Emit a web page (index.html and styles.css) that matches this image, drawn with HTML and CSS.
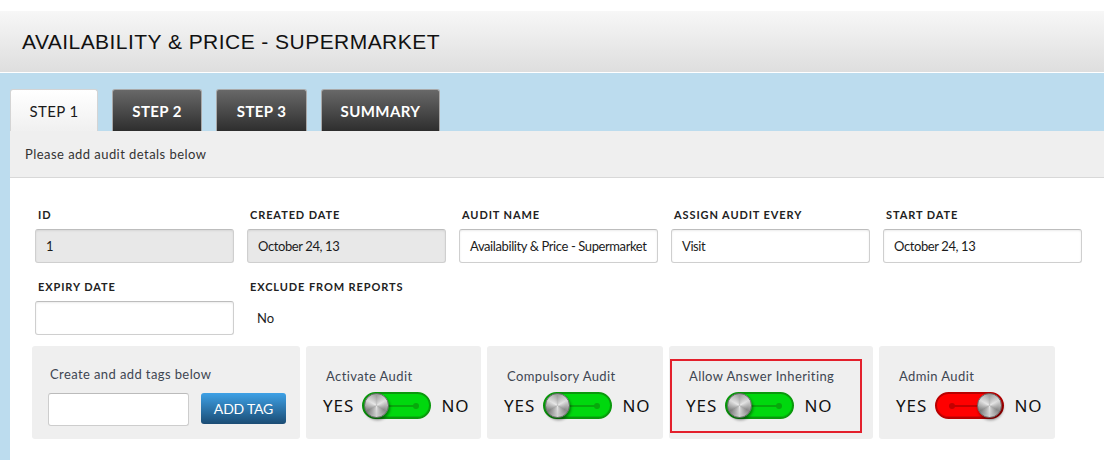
FILE: index.html
```html
<!DOCTYPE html>
<html lang="en">
<head>
  <meta charset="UTF-8" />
  <meta name="viewport" content="width=device-width, initial-scale=1.0" />
  <title>Audit - Step 1</title>
  <link rel="stylesheet" href="styles.css">
</head>
<body>
  <div class="top-gap"></div>
  <header class="page-head">
    <h1>AVAILABILITY &amp; PRICE - SUPERMARKET</h1>
  </header>

  <div class="wrap">
    <nav class="tabs">
      <a class="tab active">STEP 1</a>
      <a class="tab tab-2">STEP 2</a>
      <a class="tab tab-3">STEP 3</a>
      <a class="tab tab-sum">SUMMARY</a>
    </nav>

    <div class="panel">
      <div class="panel-head">Please add audit detals below</div>

      <div class="panel-body">
        <div class="fields">
          <div class="field">
            <label>ID</label>
            <div class="input disabled">1</div>
          </div>
          <div class="field">
            <label>CREATED DATE</label>
            <div class="input disabled">October 24, 13</div>
          </div>
          <div class="field">
            <label>AUDIT NAME</label>
            <div class="input">Availability &amp; Price - Supermarket</div>
          </div>
          <div class="field">
            <label>ASSIGN AUDIT EVERY</label>
            <div class="input">Visit</div>
          </div>
          <div class="field">
            <label>START DATE</label>
            <div class="input">October 24, 13</div>
          </div>
          <div class="field">
            <label>EXPIRY DATE</label>
            <div class="input"></div>
          </div>
          <div class="field">
            <label>EXCLUDE FROM REPORTS</label>
            <div class="plain">No</div>
          </div>
        </div>

        <div class="boxes">
          <div class="box tags">
            <p>Create and add tags below</p>
            <div class="tag-row">
              <div class="tag-input"></div>
              <button class="btn-tag">ADD TAG</button>
            </div>
          </div>

          <div class="box toggle w175">
            <div class="inner">
              <p>Activate Audit</p>
              <div class="yn">
                <span>YES</span>
                <span class="switch on"><i class="track"></i><i class="knob"></i></span>
                <span>NO</span>
              </div>
            </div>
          </div>

          <div class="box toggle w176">
            <div class="inner">
              <p>Compulsory Audit</p>
              <div class="yn">
                <span>YES</span>
                <span class="switch on"><i class="track"></i><i class="knob"></i></span>
                <span>NO</span>
              </div>
            </div>
          </div>

          <div class="box toggle w204 marked">
            <div class="inner">
              <p>Allow Answer Inheriting</p>
              <div class="yn">
                <span>YES</span>
                <span class="switch on"><i class="track"></i><i class="knob"></i></span>
                <span>NO</span>
              </div>
            </div>
          </div>

          <div class="box toggle w176">
            <div class="inner">
              <p>Admin Audit</p>
              <div class="yn">
                <span>YES</span>
                <span class="switch off"><i class="track"></i><i class="knob"></i></span>
                <span>NO</span>
              </div>
            </div>
          </div>
        </div>
      </div>
    </div>
  </div>
</body>
</html>
```

FILE: styles.css
```css
:root {
  --blue-bg: #bcdcee;
  --panel-grey: #efefef;
  --text: #222;
  --soft-text: #3e4652;
}

body {
  margin: 0;
  font-family: Lato, 'Open Sans', sans-serif;
  color: var(--text);
  background: var(--blue-bg);
  overflow: hidden;
}

.top-gap {
  height: 11px;
  background: #fff;
}

.page-head {
  height: 62px;
  box-sizing: border-box;
  padding-left: 22px;
  display: flex;
  align-items: center;
  background: linear-gradient(#f7f7f7, #dedede);
  border-bottom: 1px solid #fff;
}

.page-head h1 {
  margin: 0;
  font-family: 'Liberation Sans', Arial, sans-serif;
  font-weight: normal;
  font-size: 21px;
  color: #111;
  letter-spacing: 0.45px;
  padding-top: 1px;
}

.wrap {
  padding: 16px 0 0 10px;
  height: 400px;
}

/* tabs */
.tabs {
  display: flex;
  gap: 14px;
}

.tab {
  height: 42px;
  box-sizing: border-box;
  display: flex;
  align-items: center;
  justify-content: center;
  font-size: 15px;
  letter-spacing: 0.4px;
  border: 1px solid #a9a9a9;
  border-bottom: none;
  border-radius: 3px 3px 0 0;
  color: #fff;
  font-weight: bold;
  background: linear-gradient(#686868, #2e2e2e);
}

.tab.active {
  width: 88px;
  color: #1a1a1a;
  font-weight: normal;
  border-color: #d4d4d4;
  background: linear-gradient(#ffffff, #f0f0f0);
}

.tab-2 { width: 90px; }
.tab-3 { width: 91px; }
.tab-sum { width: 119px; }

/* panel */
.panel {
  background: #fff;
  height: 100%;
}

.panel-head {
  height: 47px;
  box-sizing: border-box;
  display: flex;
  align-items: center;
  padding-left: 15px;
  background: var(--panel-grey);
  border-bottom: 1px solid #d8d8d8;
  font-size: 13px;
  letter-spacing: 0.45px;
  color: #333;
}

.panel-body {
  padding: 30px 0 0 22px;
}

.fields {
  margin-left: 3px;
  display: grid;
  grid-template-columns: repeat(5, 199px);
  column-gap: 13px;
  row-gap: 17px;
}

.field label {
  display: block;
  font-size: 11px;
  line-height: 14px;
  font-weight: bold;
  letter-spacing: 0.9px;
  margin: 0 0 7px 3px;
}

.input {
  height: 34px;
  box-sizing: border-box;
  border: 1px solid #cfcfcf;
  border-top-color: #bdbdbd;
  border-radius: 3px;
  box-shadow: inset 0 1px 2px rgba(0,0,0,0.08);
  padding: 0 10px;
  display: flex;
  align-items: center;
  font-size: 13px;
  letter-spacing: -0.4px;
  white-space: nowrap;
  overflow: hidden;
  color: #1c1c1c;
  background: #fff;
}

.input.disabled {
  background: #e8e8e8;
}

.plain {
  height: 34px;
  display: flex;
  align-items: center;
  padding-left: 10px;
  font-size: 13px;
}

/* bottom boxes */
.boxes {
  display: flex;
  gap: 6px;
  margin-top: 11px;
}

.box {
  height: 93px;
  box-sizing: border-box;
  background: var(--panel-grey);
  border-radius: 3px;
}

.box p {
  margin: 0;
  font-size: 13px;
  line-height: 16px;
  letter-spacing: 0.4px;
  color: var(--soft-text);
}

.tags {
  width: 268px;
  padding: 20px 0 0 16px;
}

.tags p {
  padding-left: 2px;
}

.tag-row {
  display: flex;
  align-items: flex-start;
  gap: 12px;
  margin-top: 11px;
}

.tag-input {
  width: 141px;
  height: 33px;
  box-sizing: border-box;
  background: #fff;
  border: 1px solid #cdcdcd;
  border-top-color: #bbb;
  border-radius: 3px;
}

.btn-tag {
  width: 85px;
  height: 31px;
  border: none;
  border-radius: 3px;
  color: #fff;
  font-family: Lato, sans-serif;
  font-size: 14px;
  letter-spacing: -0.2px;
  background: linear-gradient(#3ea1e6, #1b4c74);
  padding: 0;
}

.toggle {
  padding: 13px 0 6px 1px;
}

.w175 { width: 175px; }
.w176 { width: 176px; }
.w204 { width: 204px; padding-right: 11px; }

.inner {
  height: 100%;
  box-sizing: border-box;
  border: 2px solid transparent;
  padding: 7px 0 0 14px;
}

.marked .inner {
  border-color: #e3202c;
}

.inner p {
  padding-left: 3px;
}

.yn {
  display: flex;
  align-items: center;
  gap: 8px;
  margin-top: 8px;
  font-family: 'Noto Sans', sans-serif;
  font-size: 17px;
  letter-spacing: 1px;
  color: #111;
}

.yn span:last-child {
  margin-left: 2px;
}

/* yes / no switch */
.switch {
  position: relative;
  width: 69px;
  height: 27px;
  box-sizing: border-box;
  border-radius: 14px;
  border: 2px solid #0a980c;
  background: #00d80e;
  box-shadow: inset 0 -1px 0 rgba(0,0,0,0.12);
}

.switch.off {
  border-color: #b80000;
  background: #ff0000;
}

.track {
  position: absolute;
  top: 11px;
  left: 14px;
  width: 38px;
  height: 2px;
  background: #07a80c;
}

.track::after {
  content: '';
  position: absolute;
  right: -3px;
  top: -2px;
  width: 6px;
  height: 6px;
  border-radius: 50%;
  background: #07a80c;
}

.off .track {
  left: 13px;
  background: #c20000;
}

.off .track::after {
  right: auto;
  left: -1px;
  background: #c20000;
}

.knob {
  position: absolute;
  top: -1px;
  left: 0;
  width: 25px;
  height: 25px;
  border-radius: 50%;
  background:
    radial-gradient(circle at 45% 45%, rgba(255,255,255,0.5), rgba(255,255,255,0) 55%),
    conic-gradient(#9a9a9a, #dcdcdc, #8a8a8a, #d0d0d0, #7c7c7c, #d8d8d8, #9a9a9a);
  border: 1px solid #6a6a6a;
  box-sizing: border-box;
  box-shadow: 1px 2px 3px rgba(0,0,0,0.45);
}

.off .knob {
  left: auto;
  right: 0;
}
```
